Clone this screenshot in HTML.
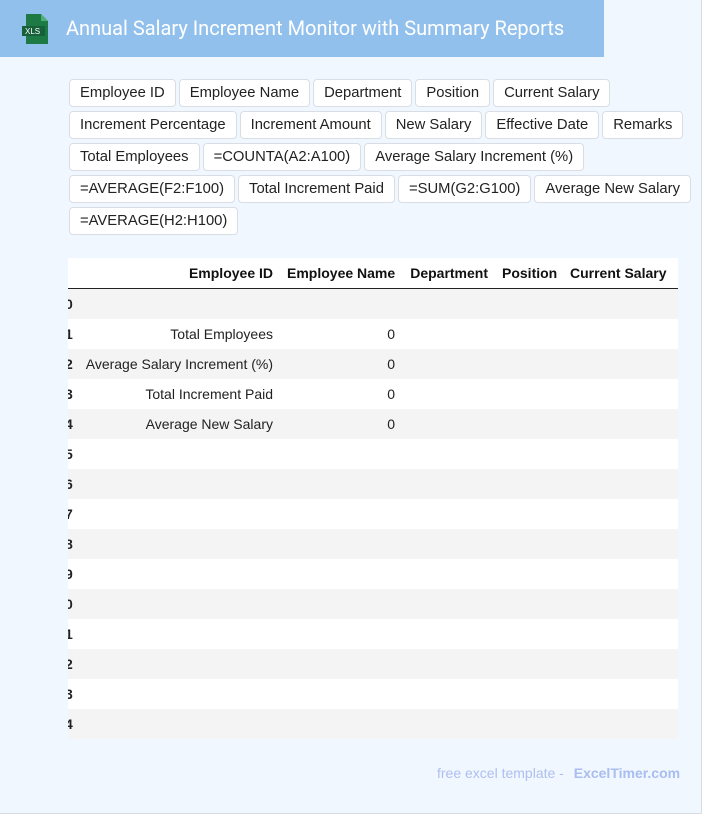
<!DOCTYPE html>
<html><head><meta charset="utf-8"><style>
body{margin:0;width:702px;height:814px;overflow:hidden;font-family:"Liberation Sans",Arial,sans-serif}
.page{position:absolute;left:0;top:0;width:701px;height:813px;background:#f0f7ff;border-right:1px solid #d8dde3;border-bottom:1px solid #d8dde3}
.hdr{position:absolute;left:0;top:0;width:604px;height:57px;background:#92c0ec}
.hdr .t{position:absolute;left:66px;top:16px;color:#fff;font-size:20px;font-family:"Roboto","Liberation Sans",sans-serif}
.btns{position:absolute;left:69px;top:79px;width:640px}
.r{height:32px;white-space:nowrap}
.b{display:inline-block;box-sizing:border-box;height:28px;line-height:26px;padding:0 10px;margin-right:3px;background:#fff;border:1px solid #d9dee5;border-radius:4px;font-size:14.8px;color:#222;vertical-align:top}
.tw{position:absolute;left:68px;top:258px;width:610px;height:481px;overflow:hidden;background:#fff}
table{position:absolute;left:-10px;top:0;border-collapse:collapse;font-size:14px;color:#222;table-layout:fixed;width:645px;white-space:nowrap}
th{font-weight:bold;text-align:right;height:30px;padding:0 7px;border-bottom:1px solid #222;color:#111;font-size:14px;background:#fff}
td{height:30px;padding:0 7px;text-align:right}
tr:nth-child(even) td{background:#f4f4f4}
td:first-child,th:first-child{font-weight:bold;text-align:left;padding:0 0 0 7px}
.f{position:absolute;left:437px;top:765px;font-size:14px;color:#aebff0}
.f b{color:#a9bdf0;margin-left:6px}
</style></head><body><div class="page">
<div class="hdr">
<svg style="position:absolute;left:22px;top:13px" width="30" height="32" viewBox="0 0 30 32"><path d="M4 1h15l7 7v23H4z" fill="#1e7a45"/><path d="M19 1v7h7z" fill="#4fae74"/><rect x="0" y="13" width="23" height="10" fill="#17613a"/><text x="3" y="21" font-size="8" fill="#fff" font-family="Liberation Sans">XLS</text></svg>
<div class="t">Annual Salary Increment Monitor with Summary Reports</div></div>
<div class="btns">
<div class="r"><span class="b">Employee ID</span><span class="b">Employee Name</span><span class="b">Department</span><span class="b">Position</span><span class="b">Current Salary</span></div>
<div class="r"><span class="b">Increment Percentage</span><span class="b">Increment Amount</span><span class="b">New Salary</span><span class="b">Effective Date</span><span class="b">Remarks</span></div>
<div class="r"><span class="b">Total Employees</span><span class="b">=COUNTA(A2:A100)</span><span class="b">Average Salary Increment (%)</span></div>
<div class="r"><span class="b">=AVERAGE(F2:F100)</span><span class="b">Total Increment Paid</span><span class="b">=SUM(G2:G100)</span><span class="b">Average New Salary</span></div>
<div class="r"><span class="b">=AVERAGE(H2:H100)</span></div>
</div>
<div class="tw"><table>
<colgroup><col style="width:20px"><col style="width:202px"><col style="width:122px"><col style="width:93px"><col style="width:68px"><col style="width:110px"><col style="width:30px"></colgroup>
<tr><th></th><th>Employee ID</th><th>Employee Name</th><th>Department</th><th>Position</th><th>Current Salary</th><th></th></tr>
<tr><td>0</td><td></td><td></td><td></td><td></td><td></td><td></td></tr>
<tr><td>1</td><td>Total Employees</td><td>0</td><td></td><td></td><td></td><td></td></tr>
<tr><td>2</td><td>Average Salary Increment (%)</td><td>0</td><td></td><td></td><td></td><td></td></tr>
<tr><td>3</td><td>Total Increment Paid</td><td>0</td><td></td><td></td><td></td><td></td></tr>
<tr><td>4</td><td>Average New Salary</td><td>0</td><td></td><td></td><td></td><td></td></tr>
<tr><td>5</td><td></td><td></td><td></td><td></td><td></td><td></td></tr>
<tr><td>6</td><td></td><td></td><td></td><td></td><td></td><td></td></tr>
<tr><td>7</td><td></td><td></td><td></td><td></td><td></td><td></td></tr>
<tr><td>8</td><td></td><td></td><td></td><td></td><td></td><td></td></tr>
<tr><td>9</td><td></td><td></td><td></td><td></td><td></td><td></td></tr>
<tr><td>0</td><td></td><td></td><td></td><td></td><td></td><td></td></tr>
<tr><td>1</td><td></td><td></td><td></td><td></td><td></td><td></td></tr>
<tr><td>2</td><td></td><td></td><td></td><td></td><td></td><td></td></tr>
<tr><td>3</td><td></td><td></td><td></td><td></td><td></td><td></td></tr>
<tr><td>4</td><td></td><td></td><td></td><td></td><td></td><td></td></tr>
</table></div>
<div class="f">free excel template - <b>ExcelTimer.com</b></div>
</div></body></html>
